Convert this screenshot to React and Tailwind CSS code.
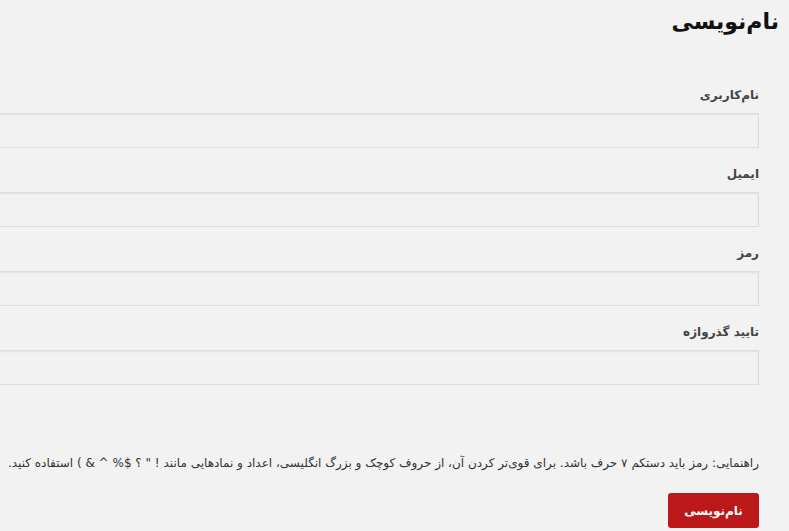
import { useState } from "react";

const fields = [
  { id: "user_login", label: "نام‌کاربری", type: "text" },
  { id: "user_email", label: "ایمیل", type: "email" },
  { id: "pass1", label: "رمز", type: "password" },
  { id: "pass2", label: "تایید گذرواژه", type: "password" },
];

export default function App() {
  const [values, setValues] = useState({});

  return (
    <div
      dir="rtl"
      className="min-h-screen w-full overflow-hidden bg-[#f2f2f2] text-[#333]"
      style={{ fontFamily: '"DejaVu Sans", "Noto Sans", sans-serif' }}
    >
      <h1 className="pr-[10px] pt-[4px] text-[22px] font-bold leading-[36px] text-[#111]">
        نام‌نویسی
      </h1>

      <form className="mr-[30px] w-[820px] pt-[44px]">
        {fields.map((f) => (
          <div key={f.id} className="mb-[15px]">
            <label
              htmlFor={f.id}
              className="block h-[22px] text-[12px] font-bold leading-[22px] text-[#444]"
            >
              {f.label}
            </label>
            <input
              id={f.id}
              type={f.type}
              value={values[f.id] || ""}
              onChange={(e) => setValues({ ...values, [f.id]: e.target.value })}
              className="mt-[7px] block h-[35px] w-full border border-[#dcdcdc] bg-[#f2f2f2] px-2 shadow-[inset_0_1px_2px_rgba(0,0,0,0.07)] outline-none"
            />
          </div>
        ))}

        <p className="mt-[67px] whitespace-nowrap text-[12px] leading-[22px] text-[#333]">
          راهنمایی: رمز باید دستکم ۷ حرف باشد. برای قوی‌تر کردن آن، از حروف کوچک و بزرگ انگلیسی، اعداد و نمادهایی مانند ! " ؟ $% ^ &amp; ) استفاده کنید.
        </p>

        <button
          type="submit"
          className="mt-[19px] h-[35px] w-[91px] rounded-[3px] bg-[#bb1919] text-[12px] font-bold text-white"
        >
          نام‌نویسی
        </button>
      </form>
    </div>
  );
}
